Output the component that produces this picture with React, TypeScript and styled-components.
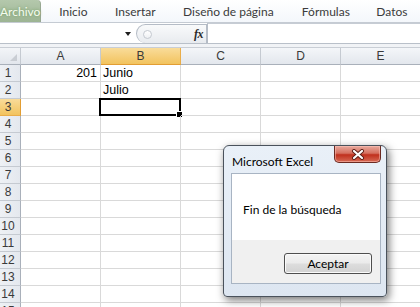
import React from 'react';
import styled, { createGlobalStyle } from 'styled-components';

const Global = createGlobalStyle`
  html, body { margin: 0; padding: 0; background: #fff; }
  body { width: 420px; height: 307px; overflow: hidden; font-family: "Liberation Sans", Arial, sans-serif; }
`;

const Page = styled.div`
  width: 420px;
  height: 307px;
  position: relative;
  overflow: hidden;
  display: flex;
  flex-direction: column;
  background: #fff;
`;

const TabBar = styled.div`
  height: 22px;
  flex: none;
  display: flex;
  align-items: stretch;
  border-bottom: 1px solid #c5cbd3;
  background: linear-gradient(#ffffff, #f4f7fb);
  font-family: Lato, "Noto Sans", sans-serif;
  font-size: 12px;
  color: #3b3b3b;
`;

const FileTab = styled.div`
  width: 49px;
  display: flex;
  align-items: center;
  justify-content: center;
  background: linear-gradient(#b4c8ac, #9cb493);
  color: #f4fbef;
  border-right: 1px solid #98a892;
  border-top-right-radius: 4px;
  text-shadow: 0 0 3px #6b9858;
`;

const Tab = styled.div<{ $w: number }>`
  width: ${(p) => p.$w}px;
  flex: none;
  display: flex;
  align-items: center;
  justify-content: center;
  white-space: nowrap;
`;

const FormulaBar = styled.div`
  height: 20px;
  flex: none;
  display: flex;
  border-bottom: 1px solid #b9c0c9;
  background: #fff;
`;

const NameBox = styled.div`
  width: 136px;
  flex: none;
  display: flex;
  align-items: center;
  justify-content: flex-end;
  padding-right: 5px;
  box-sizing: border-box;
`;

const DropArrow = styled.div`
  width: 0;
  height: 0;
  border-left: 3.5px solid transparent;
  border-right: 3.5px solid transparent;
  border-top: 4px solid #1e1e1e;
  margin-top: 2px;
`;

const ButtonArea = styled.div`
  width: 71px;
  flex: none;
  box-sizing: border-box;
  display: flex;
  align-items: center;
  justify-content: space-between;
  padding: 0 3px 0 6px;
  margin-top: 1px;
  background: linear-gradient(#f9fafb, #e8ebef);
  border: 1px solid #b5bcc6;
  border-bottom: none;
  border-top-left-radius: 10px;
  border-bottom-left-radius: 10px;
`;

const Grip = styled.div`
  width: 7px;
  height: 7px;
  border-radius: 50%;
  border: 1px solid #c4c9d0;
  background: linear-gradient(#ffffff, #eef0f3);
`;

const Fx = styled.span`
  font-family: "Liberation Serif", "Times New Roman", serif;
  font-style: italic;
  font-weight: bold;
  font-size: 12px;
  color: #2b2b2b;
  letter-spacing: -0.5px;
`;

const FormulaInput = styled.div`
  flex: 1;
  background: #fff;
  border-left: 1px solid #b5bcc6;
  border-top: 1px solid #c6ccd4;
`;

const Spacer = styled.div`
  height: 4px;
  flex: none;
  background: #f1f3f6;
  border-bottom: 1px solid #c9ced5;
  box-sizing: border-box;
`;

const Grid = styled.div`
  display: grid;
  grid-template-columns: 21px repeat(5, 80px);
  grid-auto-rows: 17px;
  flex: none;
`;

const Corner = styled.div`
  background: linear-gradient(#f3f5f8, #e2e6ec);
  border-right: 1px solid #c5cad1;
  border-bottom: 1px solid #a9b0ba;
  box-sizing: border-box;
  position: relative;
  &::after {
    content: '';
    position: absolute;
    right: 3px;
    bottom: 3px;
    width: 0;
    height: 0;
    border-left: 7px solid transparent;
    border-bottom: 7px solid #c9cdd3;
  }
`;

const ColHeader = styled.div<{ $sel?: boolean }>`
  box-sizing: border-box;
  display: flex;
  align-items: center;
  justify-content: center;
  font-size: 12px;
  color: #3a3a3a;
  background: ${(p) => (p.$sel ? 'linear-gradient(#f9dc9a, #f2c35e)' : 'linear-gradient(#f4f6f9, #e3e7ed)')};
  border-right: 1px solid ${(p) => (p.$sel ? '#e9ad4a' : '#c5cad1')};
  border-bottom: 1px solid ${(p) => (p.$sel ? '#e29d33' : '#a9b0ba')};
`;

const RowHeader = styled.div<{ $sel?: boolean }>`
  box-sizing: border-box;
  display: flex;
  align-items: center;
  justify-content: center;
  padding-right: 4px;
  font-size: 12px;
  color: #3a3a3a;
  background: ${(p) => (p.$sel ? 'linear-gradient(#f9dc9a, #f2c35e)' : 'linear-gradient(90deg, #eef1f5, #e4e8ee)')};
  border-right: 1px solid ${(p) => (p.$sel ? '#e29d33' : '#a9b0ba')};
  border-bottom: 1px solid ${(p) => (p.$sel ? '#e9ad4a' : '#c5cad1')};
`;

const Cell = styled.div<{ $right?: boolean; $active?: boolean }>`
  box-sizing: border-box;
  border-right: 1px solid #d9d9d9;
  border-bottom: 1px solid #d9d9d9;
  font-size: 12.5px;
  color: #000;
  line-height: 16px;
  padding: 0 3px 0 2px;
  text-align: ${(p) => (p.$right ? 'right' : 'left')};
  white-space: nowrap;
  overflow: visible;
  position: relative;
  ${(p) =>
    p.$active
      ? `
    &::before {
      content: '';
      position: absolute;
      left: -2px;
      top: -1px;
      right: -1px;
      bottom: -1px;
      border: 2px solid #000;
      pointer-events: none;
    }
    &::after {
      content: '';
      position: absolute;
      right: -3px;
      bottom: -3px;
      width: 5px;
      height: 5px;
      background: #000;
      border: 1px solid #fff;
    }
  `
      : ''}
`;

const Dialog = styled.div`
  position: absolute;
  left: 223px;
  top: 145px;
  width: 164px;
  height: 152px;
  box-sizing: border-box;
  border: 1px solid #4a525c;
  border-radius: 6px 6px 4px 4px;
  background: linear-gradient(#e9f0f8, #dde6f1);
  box-shadow: 2px 3px 9px rgba(0, 0, 0, 0.55);
  display: flex;
  flex-direction: column;
  padding: 0 5px 12px 7px;
`;

const TitleBar = styled.div`
  height: 27px;
  flex: none;
  display: flex;
  align-items: flex-start;
  font-family: Lato, "Noto Sans", sans-serif;
  font-size: 12px;
  color: #000;
`;

const Title = styled.span`
  padding-top: 8px;
  padding-left: 1px;
`;

const CloseButton = styled.div`
  margin-left: auto;
  width: 47px;
  height: 17px;
  box-sizing: border-box;
  border: 1px solid #6b2a22;
  border-top: none;
  border-radius: 0 0 5px 5px;
  background: linear-gradient(#e8a99d 0%, #d5705f 45%, #c0301d 55%, #d66a55 100%);
  box-shadow: inset 0 0 0 1px rgba(255, 200, 190, 0.5);
  display: flex;
  align-items: center;
  justify-content: center;
`;

const Panel = styled.div`
  flex: 1;
  display: flex;
  flex-direction: column;
  border: 1px solid #a8b4c3;
  background: #fff;
`;

const Message = styled.div`
  height: 66px;
  display: flex;
  align-items: center;
  padding: 4px 0 0 11px;
  box-sizing: border-box;
  font-family: Lato, "Noto Sans", sans-serif;
  font-size: 12px;
  color: #000;
`;

const Footer = styled.div`
  flex: 1;
  background: #f0f0f0;
  display: flex;
  justify-content: flex-end;
  align-items: flex-start;
  padding: 13px 8px 0 0;
`;

const Button = styled.div`
  width: 88px;
  height: 21px;
  box-sizing: border-box;
  border: 1px solid #4e4e4e;
  border-radius: 3px;
  background: linear-gradient(#f3f3f3 0%, #ebebeb 48%, #dddddd 52%, #d2d2d2 100%);
  box-shadow: inset 0 0 0 1px #fafafa;
  display: flex;
  align-items: center;
  justify-content: center;
  font-family: Lato, "Noto Sans", sans-serif;
  font-size: 12px;
  color: #000;
`;

const tabs: [string, number][] = [
  ['Inicio', 64],
  ['Insertar', 60],
  ['Diseño de página', 126],
  ['Fórmulas', 69],
  ['Datos', 63],
];

const cols = ['A', 'B', 'C', 'D', 'E'];

const data: Record<string, string> = {
  '1A': '201',
  '1B': 'Junio',
  '2B': 'Julio',
};

export default function App() {
  const rows = Array.from({ length: 15 }, (_, i) => i + 1);
  return (
    <Page>
      <Global />
      <TabBar>
        <FileTab>Archivo</FileTab>
        {tabs.map(([t, w]) => (
          <Tab key={t} $w={w}>
            {t}
          </Tab>
        ))}
      </TabBar>
      <FormulaBar>
        <NameBox>
          <DropArrow />
        </NameBox>
        <ButtonArea>
          <Grip />
          <Fx>fx</Fx>
        </ButtonArea>
        <FormulaInput />
      </FormulaBar>
      <Spacer />
      <Grid>
        <Corner />
        {cols.map((c) => (
          <ColHeader key={c} $sel={c === 'B'}>
            {c}
          </ColHeader>
        ))}
        {rows.map((r) => (
          <React.Fragment key={r}>
            <RowHeader $sel={r === 3}>{r}</RowHeader>
            {cols.map((c) => (
              <Cell key={c} $right={c === 'A'} $active={r === 3 && c === 'B'}>
                {data[`${r}${c}`] ?? ''}
              </Cell>
            ))}
          </React.Fragment>
        ))}
      </Grid>
      <Dialog>
        <TitleBar>
          <Title>Microsoft Excel</Title>
          <CloseButton>
            <svg width="14" height="11" viewBox="0 0 14 11">
              <path d="M3 2 L11 9 M11 2 L3 9" stroke="#5a1d15" strokeWidth="4" strokeLinecap="round" />
              <path d="M3 2 L11 9 M11 2 L3 9" stroke="#ffffff" strokeWidth="2.2" strokeLinecap="round" />
            </svg>
          </CloseButton>
        </TitleBar>
        <Panel>
          <Message>Fin de la búsqueda</Message>
          <Footer>
            <Button>Aceptar</Button>
          </Footer>
        </Panel>
      </Dialog>
    </Page>
  );
}
